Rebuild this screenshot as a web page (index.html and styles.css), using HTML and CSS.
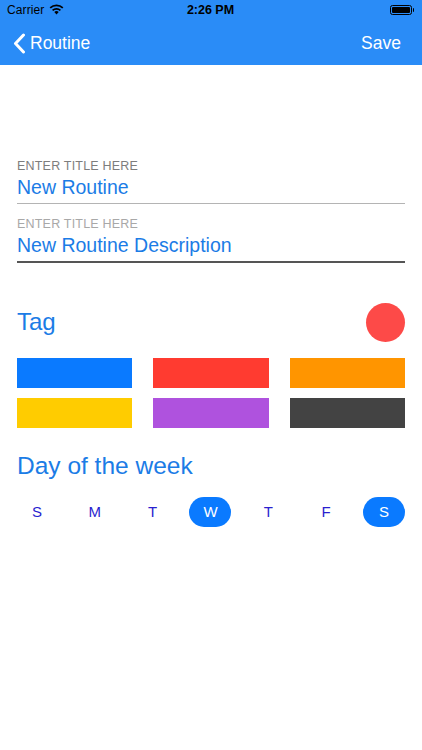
FILE: index.html
```html
<!DOCTYPE html>
<html>
<head>
<meta charset="utf-8">
<link rel="stylesheet" href="styles.css">
</head>
<body>
<div class="header">
  <div class="status">
    <div class="status-left">
      <span class="carrier">Carrier</span>
      <svg class="wifi" width="15" height="11" viewBox="0 0 15 11">
        <path d="M7.5 10.5 L5.3 8.1 A3.2 3.2 0 0 1 9.7 8.1 Z" fill="#000"/>
        <path d="M3.6 6.4 A5.6 5.6 0 0 1 11.4 6.4" stroke="#000" stroke-width="1.7" fill="none"/>
        <path d="M1.2 3.9 A9 9 0 0 1 13.8 3.9" stroke="#000" stroke-width="1.7" fill="none"/>
      </svg>
    </div>
    <div class="time">2:26 PM</div>
    <div class="status-right">
      <div class="battery"><div class="battery-fill"></div></div>
      <div class="battery-tip"></div>
    </div>
  </div>
  <div class="nav">
    <div class="back">
      <svg class="chev" width="13" height="21" viewBox="0 0 13 21">
        <path d="M10.5 2 L2.5 10.5 L10.5 19" stroke="#fff" stroke-width="3" fill="none" stroke-linecap="round" stroke-linejoin="round"/>
      </svg>
      <span>Routine</span>
    </div>
    <div class="save">Save</div>
  </div>
</div>

<div class="content">
  <div class="field">
    <div class="label">ENTER TITLE HERE</div>
    <div class="value">New Routine</div>
    <div class="line"></div>
  </div>
  <div class="field field2">
    <div class="label light">ENTER TITLE HERE</div>
    <div class="value">New Routine Description</div>
    <div class="line dark"></div>
  </div>

  <div class="tag-row">
    <div class="heading">Tag</div>
    <div class="tag-dot"></div>
  </div>
  <div class="swatches">
    <div class="sw blue"></div>
    <div class="sw red"></div>
    <div class="sw orange"></div>
    <div class="sw yellow"></div>
    <div class="sw purple"></div>
    <div class="sw gray"></div>
  </div>

  <div class="heading week">Day of the week</div>
  <div class="days">
    <div class="day">S</div>
    <div class="day">M</div>
    <div class="day">T</div>
    <div class="day on">W</div>
    <div class="day">T</div>
    <div class="day">F</div>
    <div class="day on">S</div>
  </div>
</div>
</body>
</html>
```

FILE: styles.css
```css
* { box-sizing: border-box; }
html, body { margin: 0; padding: 0; }
body {
  width: 422px;
  height: 750px;
  background: #fff;
  font-family: "Liberation Sans", Arial, sans-serif;
  overflow: hidden;
}
.header {
  background: #2a8cf7;
  height: 65px;
}
.status {
  height: 20px;
  display: flex;
  align-items: center;
  justify-content: space-between;
  padding: 0 8px 0 7px;
  font-size: 12px;
  color: #000;
}
.status-left { display: flex; align-items: center; gap: 5px; width: 120px; }
.carrier { letter-spacing: 0.1px; }
.wifi { margin-top: -1px; }
.time { font-weight: bold; font-size: 12.5px; }
.status-right { display: flex; align-items: center; justify-content: flex-end; width: 120px; }
.battery {
  width: 22px;
  height: 10px;
  border: 1px solid #000;
  border-radius: 2.5px;
  padding: 1px;
}
.battery-fill { width: 100%; height: 100%; background: #000; border-radius: 1px; }
.battery-tip { width: 1.5px; height: 4px; background: #000; margin-left: 1px; border-radius: 0 1px 1px 0; }

.nav {
  height: 45px;
  display: flex;
  align-items: center;
  justify-content: space-between;
  padding: 2px 21px 0 13px;
  color: #fff;
  font-size: 17.5px;
}
.back { display: flex; align-items: center; gap: 4px; }
.chev { display: block; }

.content { padding: 0 17px 0 17px; }
.field { padding-top: 94px; }
.field2 { padding-top: 13px; }
.label {
  font-size: 12.5px;
  color: #7d7d7d;
  letter-spacing: 0.2px;
  line-height: 15px;
}
.label.light { color: #a8a8a8; }
.value {
  font-size: 19.5px;
  color: #1b7ce6;
  line-height: 24px;
  margin-top: 1px;
}
.line {
  height: 1px;
  background: #b4b4b4;
  margin-top: 4px;
}
.line.dark { background: #555; height: 1.5px; }

.tag-row {
  display: flex;
  align-items: center;
  justify-content: space-between;
  margin-top: 40px;
}
.heading {
  font-size: 24px;
  color: #1b7ce6;
}
.tag-dot {
  width: 39px;
  height: 39px;
  border-radius: 50%;
  background: #fd4a48;
}
.swatches {
  display: grid;
  grid-template-columns: repeat(3, 1fr);
  column-gap: 21px;
  row-gap: 10px;
  margin-top: 16px;
}
.sw { height: 30px; }
.blue { background: #0a7aff; }
.red { background: #ff3b30; }
.orange { background: #ff9500; }
.yellow { background: #ffcc00; }
.purple { background: #af52de; }
.gray { background: #434343; }

.week { margin-top: 24px; font-size: 24.5px; }
.days {
  display: flex;
  justify-content: space-between;
  margin-top: 17px;
  margin-left: -1px;
}
.day {
  width: 42px;
  height: 30px;
  border-radius: 15px;
  display: flex;
  align-items: center;
  justify-content: center;
  font-size: 15px;
  color: #2a1fcf;
}
.day.on { background: #0a7aff; color: #fff; }
```
